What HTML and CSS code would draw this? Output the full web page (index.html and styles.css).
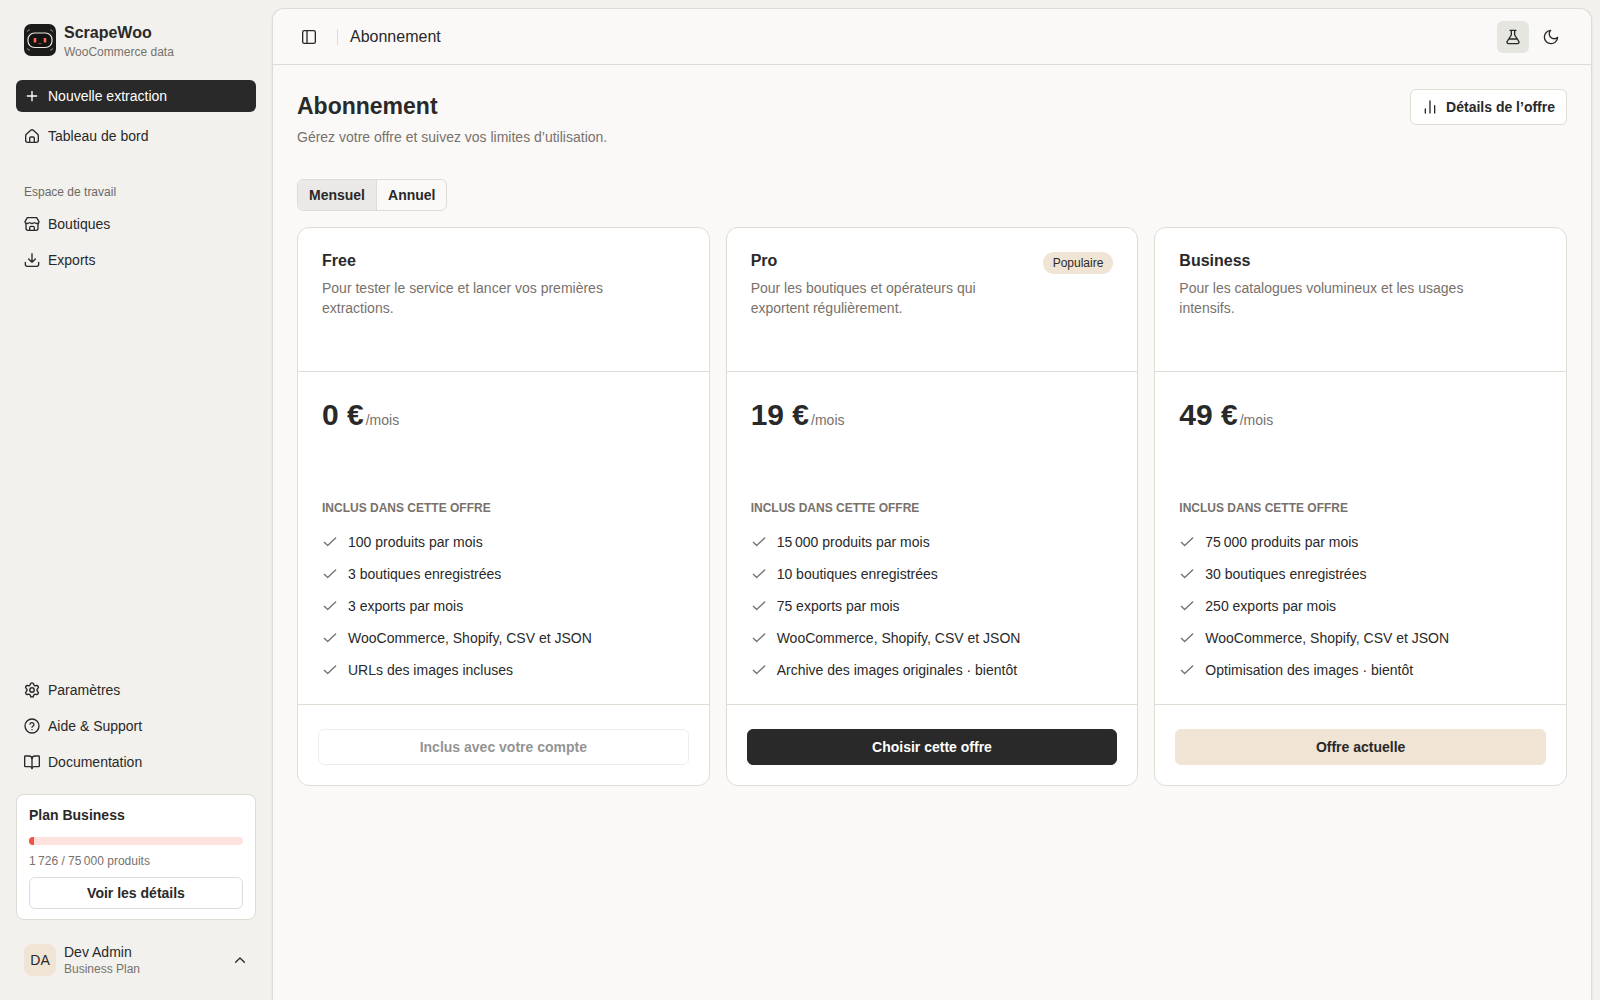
FILE: index.html
```html
<!DOCTYPE html>
<html lang="fr">
<head>
  <meta charset="UTF-8">
  <meta name="viewport" content="width=device-width, initial-scale=1">
  <title>Abonnement - ScrapeWoo</title>
  <link rel="stylesheet" href="styles.css">
</head>
<body>
  <!-- Icônes partagées -->
  <svg class="sprite" aria-hidden="true">
    <symbol id="i-check" viewBox="0 0 24 24"><path d="M3.5 12.5 8.5 17.3 20.5 6"/></symbol>
  </svg>

  <div class="app">
    <aside class="sidebar">
      <a class="brand" href="#">
        <svg class="brand-logo" viewBox="0 0 32 32" aria-hidden="true">
          <rect width="32" height="32" rx="7" fill="#1b1b19"/>
          <path d="M3.5 8v-.5A1.5 1.5 0 0 1 5 6h1M26 6h1a1.5 1.5 0 0 1 1.5 1.5V8M3.5 24v.5A1.5 1.5 0 0 0 5 26h1M26 26h1a1.5 1.5 0 0 0 1.5-1.5V24" fill="none" stroke="#8b8a85"/>
          <rect x="4" y="9" width="24" height="14.5" rx="6.5" fill="#141413" stroke="#e8e6df" stroke-width="1.2"/>
          <rect x="9.7" y="14" width="2.6" height="4.5" rx="0.5" fill="#f9694d"/>
          <rect x="19.7" y="14" width="2.6" height="4.5" rx="0.5" fill="#f9694d"/>
          <path d="M14.5 19.5h3" stroke="#a84a38" fill="none"/>
        </svg>
        <span class="stack">
          <span class="brand-name">ScrapeWoo</span>
          <span class="small">WooCommerce data</span>
        </span>
      </a>

      <nav class="nav">
        <a class="nav-item primary" href="#">
          <svg class="icon" viewBox="0 0 24 24"><path d="M5 12h14M12 5v14"/></svg>
          Nouvelle extraction
        </a>
        <a class="nav-item" href="#">
          <svg class="icon" viewBox="0 0 24 24"><path d="M8.5 21.5v-6a2 2 0 0 1 2-2h3a2 2 0 0 1 2 2v6"/><path d="M2.5 11.5a3 3 0 0 1 1.1-2.3l6.5-5.8a3 3 0 0 1 3.9 0l6.5 5.8a3 3 0 0 1 1 2.3v7a3 3 0 0 1-3 3h-13a3 3 0 0 1-3-3z"/></svg>
          Tableau de bord
        </a>
      </nav>

      <h2 class="nav-label">Espace de travail</h2>
      <nav class="nav nav-tight">
        <a class="nav-item" href="#">
          <svg class="icon" viewBox="0 0 24 24"><path d="M3 11v7.5a3 3 0 0 0 3 3h12a3 3 0 0 0 3-3V11"/><path d="M5 2.5h14l3.5 6c0 1.7-1.4 2.8-3.2 2.8S16.5 10 15.5 10s-1.8 1.3-3.5 1.3S9.5 10 8.5 10s-2 1.3-3.8 1.3-3.2-1.1-3.2-2.8z"/><path d="M8.5 21.5v-4a2 2 0 0 1 2-2h3a2 2 0 0 1 2 2v4"/></svg>
          Boutiques
        </a>
        <a class="nav-item" href="#">
          <svg class="icon" viewBox="0 0 24 24"><path d="M12 2.5V15M7 10.5l5 5 5-5"/><path d="M2 15.5v3a3 3 0 0 0 3 3h14a3 3 0 0 0 3-3v-3"/></svg>
          Exports
        </a>
      </nav>

      <nav class="nav nav-tight nav-bottom">
        <a class="nav-item" href="#">
          <svg class="icon" viewBox="1 1 22 22"><path d="M9.7 4.1a2.34 2.34 0 0 1 4.6 0 2.34 2.34 0 0 0 3.3 1.9 2.34 2.34 0 0 1 2.3 4 2.34 2.34 0 0 0 0 4 2.34 2.34 0 0 1-2.3 4 2.34 2.34 0 0 0-3.3 1.9 2.34 2.34 0 0 1-4.6 0A2.34 2.34 0 0 0 6.4 18a2.34 2.34 0 0 1-2.3-4 2.34 2.34 0 0 0 0-4 2.34 2.34 0 0 1 2.3-4 2.34 2.34 0 0 0 3.3-1.9"/><circle cx="12" cy="12" r="3"/></svg>
          Paramètres
        </a>
        <a class="nav-item" href="#">
          <svg class="icon" viewBox="0 0 24 24"><circle cx="12" cy="12" r="10.5"/><path d="M9 9.2a3 3 0 0 1 5.9 1c0 2-2.9 2.3-2.9 3.8M12 17.5h.01"/></svg>
          Aide &amp; Support
        </a>
        <a class="nav-item" href="#">
          <svg class="icon" viewBox="0 0 24 24"><path d="M12 6v16"/><path d="M2 3h5.5A4.5 4.5 0 0 1 12 7a4.5 4.5 0 0 1 4.5-4H22a1 1 0 0 1 1 1v14a1 1 0 0 1-1 1h-6.5c-2 0-3.5 1-3.5 2.5C12 20 10.5 19 8.5 19H2a1 1 0 0 1-1-1V4a1 1 0 0 1 1-1z"/></svg>
          Documentation
        </a>
      </nav>

      <section class="usage">
        <h2 class="usage-title">Plan Business</h2>
        <div class="meter" role="progressbar" aria-label="Produits utilisés" aria-valuemin="0" aria-valuemax="75000" aria-valuenow="1726">
          <div class="meter-fill" style="width: 2.3%"></div>
        </div>
        <p class="small">1&#8239;726 / 75&#8239;000 produits</p>
        <button class="btn btn-small" type="button">Voir les détails</button>
      </section>

      <button class="user" type="button">
        <span class="avatar">DA</span>
        <span class="stack">
          <span class="user-name">Dev Admin</span>
          <span class="small">Business Plan</span>
        </span>
        <svg class="icon" viewBox="0 0 24 24"><path d="m5.5 15.5 6.5-6.5 6.5 6.5"/></svg>
      </button>
    </aside>

    <main class="panel">
      <header class="topbar">
        <button class="icon-btn" type="button" aria-label="Réduire le menu">
          <svg class="icon" viewBox="0 0 24 24"><rect x="2.5" y="2.5" width="19" height="19" rx="2.5"/><path d="M9 2.5v19"/></svg>
        </button>
        <span class="separator"></span>
        <span class="topbar-title">Abonnement</span>
        <div class="topbar-actions">
          <button class="icon-btn active" type="button" aria-label="Mode test">
            <svg class="icon" viewBox="0 0 24 24"><path d="M9.5 2v7L3.3 18.5A2.3 2.3 0 0 0 5.2 22h13.6a2.3 2.3 0 0 0 1.9-3.5L14.5 9V2M7.5 2h9M6.5 15h11"/></svg>
          </button>
          <button class="icon-btn" type="button" aria-label="Thème sombre">
            <svg class="icon" viewBox="0 0 24 24"><path d="M22 12.5A10 10 0 1 1 11.5 2 6.8 6.8 0 0 0 22 12.5z"/></svg>
          </button>
        </div>
      </header>

      <div class="content">
        <div class="page-head">
          <div>
            <h1>Abonnement</h1>
            <p class="lead">Gérez votre offre et suivez vos limites d’utilisation.</p>
          </div>
          <button class="btn" type="button">
            <svg class="icon" viewBox="0 0 24 24"><path d="M5 21v-6M12 21V3M19 21V10"/></svg>
            Détails de l’offre
          </button>
        </div>

        <div class="toggle" role="group" aria-label="Facturation">
          <button class="toggle-btn selected" type="button" aria-pressed="true">Mensuel</button>
          <button class="toggle-btn" type="button" aria-pressed="false">Annuel</button>
        </div>

        <div class="plans">
          <article class="plan">
            <div class="plan-head">
              <div>
                <h2>Free</h2>
                <p>Pour tester le service et lancer vos premières extractions.</p>
              </div>
            </div>
            <div class="plan-body">
              <p class="price"><strong>0 €</strong><span>/mois</span></p>
              <h3>Inclus dans cette offre</h3>
              <ul>
                <li><svg class="icon"><use href="#i-check"/></svg>100 produits par mois</li>
                <li><svg class="icon"><use href="#i-check"/></svg>3 boutiques enregistrées</li>
                <li><svg class="icon"><use href="#i-check"/></svg>3 exports par mois</li>
                <li><svg class="icon"><use href="#i-check"/></svg>WooCommerce, Shopify, CSV et JSON</li>
                <li><svg class="icon"><use href="#i-check"/></svg>URLs des images incluses</li>
              </ul>
            </div>
            <div class="plan-foot">
              <button class="btn" type="button" disabled>Inclus avec votre compte</button>
            </div>
          </article>

          <article class="plan">
            <div class="plan-head">
              <div>
                <h2>Pro</h2>
                <p>Pour les boutiques et opérateurs qui exportent régulièrement.</p>
              </div>
              <span class="badge">Populaire</span>
            </div>
            <div class="plan-body">
              <p class="price"><strong>19 €</strong><span>/mois</span></p>
              <h3>Inclus dans cette offre</h3>
              <ul>
                <li><svg class="icon"><use href="#i-check"/></svg>15&#8239;000 produits par mois</li>
                <li><svg class="icon"><use href="#i-check"/></svg>10 boutiques enregistrées</li>
                <li><svg class="icon"><use href="#i-check"/></svg>75 exports par mois</li>
                <li><svg class="icon"><use href="#i-check"/></svg>WooCommerce, Shopify, CSV et JSON</li>
                <li><svg class="icon"><use href="#i-check"/></svg>Archive des images originales · bientôt</li>
              </ul>
            </div>
            <div class="plan-foot">
              <button class="btn btn-dark" type="button">Choisir cette offre</button>
            </div>
          </article>

          <article class="plan">
            <div class="plan-head">
              <div>
                <h2>Business</h2>
                <p>Pour les catalogues volumineux et les usages intensifs.</p>
              </div>
            </div>
            <div class="plan-body">
              <p class="price"><strong>49 €</strong><span>/mois</span></p>
              <h3>Inclus dans cette offre</h3>
              <ul>
                <li><svg class="icon"><use href="#i-check"/></svg>75&#8239;000 produits par mois</li>
                <li><svg class="icon"><use href="#i-check"/></svg>30 boutiques enregistrées</li>
                <li><svg class="icon"><use href="#i-check"/></svg>250 exports par mois</li>
                <li><svg class="icon"><use href="#i-check"/></svg>WooCommerce, Shopify, CSV et JSON</li>
                <li><svg class="icon"><use href="#i-check"/></svg>Optimisation des images · bientôt</li>
              </ul>
            </div>
            <div class="plan-foot">
              <button class="btn btn-sand" type="button">Offre actuelle</button>
            </div>
          </article>
        </div>
      </div>
    </main>
  </div>
</body>
</html>
```

FILE: styles.css
```css
:root {
  --bg: #f2f1ed;
  --panel: #faf9f7;
  --text: #292929;
  --muted: #78716c;
  --border: #dfdcd5;
  --sand: #f0e4d4;
  --dark: #292929;
}

* {
  box-sizing: border-box;
}

body {
  margin: 0;
  background: var(--bg);
  color: var(--text);
  font-family: "Liberation Sans", Arial, sans-serif;
  font-size: 14px;
  line-height: 20px;
}

h1, h2, h3, p, ul {
  margin: 0;
  padding: 0;
}

a {
  color: inherit;
  text-decoration: none;
}

button {
  font: inherit;
  color: inherit;
  cursor: pointer;
}

.sprite {
  display: none;
}

.icon {
  width: 16px;
  height: 16px;
  flex: none;
  fill: none;
  stroke: currentColor;
  stroke-width: 2;
  stroke-linecap: round;
  stroke-linejoin: round;
}

.small {
  font-size: 12px;
  line-height: 16px;
  color: var(--muted);
}

.stack {
  display: flex;
  flex-direction: column;
}

.app {
  display: flex;
  height: 100vh;
  overflow: hidden;
}

/* Sidebar */
.sidebar {
  width: 272px;
  flex: none;
  display: flex;
  flex-direction: column;
  padding: 16px;
}

.brand {
  display: flex;
  align-items: center;
  gap: 8px;
  height: 48px;
  padding: 0 8px;
  margin-bottom: 16px;
}

.brand .stack {
  gap: 1px;
  padding-top: 3px;
}

.brand-logo {
  width: 32px;
  height: 32px;
}

.brand-name {
  font-size: 16px;
  line-height: 20px;
  font-weight: bold;
}

.nav {
  display: flex;
  flex-direction: column;
  gap: 8px;
}

.nav-tight {
  gap: 4px;
}

.nav-item {
  display: flex;
  align-items: center;
  gap: 8px;
  height: 32px;
  padding: 0 8px;
  border-radius: 6px;
}

.nav-item.primary {
  background: var(--dark);
  color: #fff;
}

.nav-label {
  margin-top: 24px;
  padding: 8px;
  font-size: 12px;
  line-height: 16px;
  font-weight: normal;
  color: #6b6966;
}

.nav-bottom {
  margin-top: auto;
}

.usage {
  display: flex;
  flex-direction: column;
  gap: 8px;
  margin: 16px 0;
  padding: 10px 12px;
  background: #fff;
  border: 1px solid var(--border);
  border-radius: 8px;
}

.usage-title {
  font-size: 14px;
  line-height: 20px;
  margin-bottom: 4px;
}

.meter {
  height: 8px;
  border-radius: 4px;
  background: #fde3df;
  overflow: hidden;
}

.meter-fill {
  height: 100%;
  background: #f5533d;
}

.user {
  display: flex;
  align-items: center;
  gap: 8px;
  height: 48px;
  padding: 0 8px;
  border: 0;
  background: none;
  text-align: left;
}

.user .icon {
  margin-left: auto;
}

.user-name {
  line-height: 17px;
}

.avatar {
  display: grid;
  place-items: center;
  width: 32px;
  height: 32px;
  border-radius: 8px;
  background: var(--sand);
}

/* Main panel */
.panel {
  flex: 1;
  min-width: 0;
  margin: 8px 8px 0 0;
  background: var(--panel);
  border: 1px solid var(--border);
  border-bottom: 0;
  border-radius: 12px 12px 0 0;
  box-shadow: 0 1px 3px rgba(0, 0, 0, 0.08);
}

.topbar {
  display: flex;
  align-items: center;
  height: 56px;
  padding: 0 24px 0 20px;
  border-bottom: 1px solid var(--border);
}

.topbar-title {
  font-size: 16px;
  line-height: 20px;
}

.separator {
  width: 1px;
  height: 16px;
  margin: 0 12px;
  background: var(--border);
}

.topbar-actions {
  display: flex;
  gap: 6px;
  margin-left: auto;
}

.icon-btn {
  display: grid;
  place-items: center;
  width: 32px;
  height: 32px;
  padding: 0;
  border: 0;
  border-radius: 6px;
  background: none;
}

.icon-btn.active {
  background: #e5e6df;
}

.content {
  padding: 24px;
}

.page-head {
  display: flex;
  justify-content: space-between;
  align-items: flex-start;
  margin-bottom: 32px;
}

h1 {
  font-size: 23px;
  line-height: 34px;
}

.lead {
  margin-top: 4px;
  color: var(--muted);
}

.btn {
  display: flex;
  align-items: center;
  justify-content: center;
  gap: 8px;
  height: 36px;
  padding: 0 11px;
  background: #fff;
  border: 1px solid var(--border);
  border-radius: 6px;
  font-weight: bold;
}

.btn-small {
  height: 32px;
}

.btn:disabled {
  opacity: 0.5;
  cursor: default;
}

.btn-dark {
  background: var(--dark);
  border-color: var(--dark);
  color: #fff;
}

.btn-sand {
  background: var(--sand);
  border-color: var(--sand);
}

.toggle {
  display: inline-flex;
  height: 32px;
  margin-bottom: 16px;
  border: 1px solid var(--border);
  border-radius: 6px;
  overflow: hidden;
  vertical-align: top;
}

.toggle-btn {
  padding: 0 11px;
  border: 0;
  background: none;
  font-weight: bold;
}

.toggle-btn + .toggle-btn {
  border-left: 1px solid var(--border);
}

.toggle-btn.selected {
  background: #eae9e7;
}

/* Plans */
.plans {
  display: grid;
  grid-template-columns: repeat(3, 1fr);
  gap: 16px;
}

.plan {
  background: #fff;
  border: 1px solid var(--border);
  border-radius: 12px;
}

.plan-head {
  display: flex;
  justify-content: space-between;
  align-items: flex-start;
  gap: 16px;
  min-height: 144px;
  padding: 24px;
  border-bottom: 1px solid var(--border);
}

.plan-head h2 {
  font-size: 16px;
  line-height: 18px;
}

.plan-head p {
  max-width: 320px;
  margin-top: 8px;
  color: var(--muted);
}

.badge {
  flex: none;
  padding: 3px 10px;
  border-radius: 11px;
  background: var(--sand);
  font-size: 12px;
  line-height: 16px;
}

.plan-body {
  padding: 24px;
}

.price {
  display: flex;
  align-items: baseline;
  gap: 2px;
  min-height: 104px;
  color: var(--muted);
}

.price strong {
  font-size: 30px;
  line-height: 38px;
  color: var(--text);
}

.plan-body h3 {
  margin-bottom: 16px;
  font-size: 12px;
  line-height: 16px;
  text-transform: uppercase;
  color: var(--muted);
}

.plan-body ul {
  display: flex;
  flex-direction: column;
  gap: 12px;
  list-style: none;
}

.plan-body li {
  display: flex;
  align-items: center;
  gap: 10px;
}

.plan-body li .icon {
  color: var(--muted);
}

.plan-foot {
  padding: 24px 20px 20px;
  border-top: 1px solid var(--border);
}

.plan-foot .btn {
  width: 100%;
}
```
